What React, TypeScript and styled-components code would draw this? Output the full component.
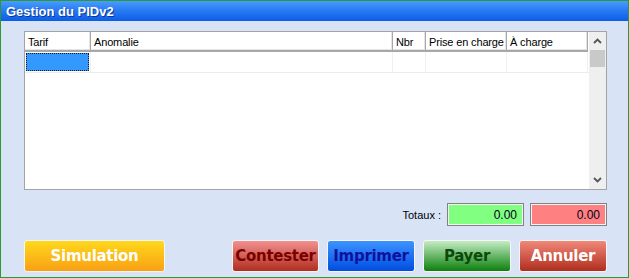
import React from 'react';
import styled, { createGlobalStyle } from 'styled-components';

const GlobalStyle = createGlobalStyle`
  html, body {
    margin: 0;
    padding: 0;
    background: #d8e4f6;
  }
  * {
    box-sizing: border-box;
  }
`;

const Window = styled.div`
  width: 629px;
  height: 278px;
  border: 1px solid #2c9a2c;
  display: flex;
  flex-direction: column;
  background: #d8e4f6;
  font-family: 'Liberation Sans', Arial, sans-serif;
  overflow: hidden;
`;

const TitleBar = styled.div`
  height: 20px;
  display: flex;
  align-items: center;
  padding-left: 5px;
  background: linear-gradient(#4a9cff 0%, #2a7cf4 45%, #0c5ce6 100%);
  color: #ffffff;
  font-size: 13px;
  font-weight: bold;
  text-shadow: 1px 1px 0 #0a3a90;
`;

const Body = styled.div`
  flex: 1;
  display: flex;
  flex-direction: column;
  padding: 10px 21px 5px 23px;
`;

const Grid = styled.div`
  height: 159px;
  border: 1px solid #a4a4a4;
  background: #ffffff;
  display: flex;
`;

const Table = styled.div`
  flex: 1;
  display: flex;
  flex-direction: column;
`;

const HeaderRow = styled.div`
  display: flex;
  height: 20px;
`;

const HeaderCell = styled.div<{ $w: number }>`
  width: ${(p) => p.$w}px;
  flex: 0 0 auto;
  display: flex;
  align-items: center;
  padding-left: 3px;
  font-size: 11px;
  letter-spacing: -0.15px;
  color: #000000;
  background: #ffffff;
  box-shadow: inset -1px -2px 0 #a8a8a8, inset -2px -3px 0 #e4e4e4;
  white-space: nowrap;
  overflow: hidden;
`;

const DataRow = styled.div`
  display: flex;
  height: 21px;
  border-bottom: 1px solid #ececec;
`;

const DataCell = styled.div<{ $w: number; $selected?: boolean }>`
  width: ${(p) => p.$w}px;
  flex: 0 0 auto;
  border-right: 1px solid #f0f0f0;
  padding: 1px;
  display: flex;
  &::before {
    content: '';
    flex: 1;
    background: ${(p) => (p.$selected ? '#3399ff' : 'transparent')};
    border: ${(p) => (p.$selected ? '1px dotted #1a1a1a' : 'none')};
  }
`;

const Scrollbar = styled.div`
  width: 17px;
  background: #efefef;
  display: flex;
  flex-direction: column;
`;

const ScrollArrow = styled.div`
  height: 18px;
  display: flex;
  align-items: center;
  justify-content: center;
`;

const ScrollThumb = styled.div`
  height: 17px;
  margin: 0 1px;
  background: #c9c9c9;
`;

const ScrollTrack = styled.div`
  flex: 1;
`;

const TotalsRow = styled.div`
  display: flex;
  justify-content: flex-end;
  align-items: center;
  gap: 6px;
  margin-top: 13px;
`;

const TotalsLabel = styled.span`
  font-size: 11px;
  color: #000000;
`;

const TotalBox = styled.div<{ $bg: string }>`
  width: 77px;
  height: 23px;
  border: 1px solid #828282;
  box-shadow: inset 0 0 0 1px #f4f4f4;
  background: ${(p) => p.$bg};
  display: flex;
  align-items: center;
  justify-content: flex-end;
  padding-right: 6px;
  font-size: 12px;
  color: #000020;
`;

const ButtonRow = styled.div`
  display: flex;
  gap: 8px;
  margin-top: 14px;
`;

const ActionButton = styled.button<{ $top: string; $bottom: string; $color: string; $w: number }>`
  width: ${(p) => p.$w}px;
  height: 32px;
  border: 1px solid #f6f6f6;
  border-radius: 3px;
  background: linear-gradient(${(p) => p.$top}, ${(p) => p.$bottom});
  color: ${(p) => p.$color};
  font-family: 'DejaVu Sans', 'Liberation Sans', sans-serif;
  font-size: 15px;
  font-weight: bold;
  letter-spacing: -0.3px;
  padding: 0;
  cursor: pointer;
  &:first-child {
    margin-right: auto;
  }
`;

const columns = [
  { label: 'Tarif', w: 66 },
  { label: 'Anomalie', w: 302 },
  { label: 'Nbr', w: 33 },
  { label: 'Prise en charge', w: 81 },
  { label: 'À charge', w: 81 },
];

const buttons = [
  { label: 'Simulation', top: '#ffd81c', bottom: '#f9a014', color: '#ffffff', w: 141 },
  { label: 'Contester', top: '#f29090', bottom: '#b02e1e', color: '#7a0000', w: 87 },
  { label: 'Imprimer', top: '#3d94ff', bottom: '#004ee0', color: '#1010a0', w: 88 },
  { label: 'Payer', top: '#c4ecc4', bottom: '#0c800c', color: '#0c4a0c', w: 88 },
  { label: 'Annuler', top: '#f08878', bottom: '#b02e1e', color: '#ffffff', w: 88 },
];

const Chevron = ({ up }: { up?: boolean }) => (
  <svg width="9" height="6" viewBox="0 0 9 6">
    <path
      d={up ? 'M1 5 L4.5 1.5 L8 5' : 'M1 1 L4.5 4.5 L8 1'}
      fill="none"
      stroke="#555555"
      strokeWidth="1.8"
    />
  </svg>
);

const App = () => (
  <>
    <GlobalStyle />
    <Window>
      <TitleBar>Gestion du PIDv2</TitleBar>
      <Body>
        <Grid>
          <Table>
            <HeaderRow>
              {columns.map((c) => (
                <HeaderCell key={c.label} $w={c.w}>
                  {c.label}
                </HeaderCell>
              ))}
            </HeaderRow>
            <DataRow>
              {columns.map((c, i) => (
                <DataCell key={c.label} $w={c.w} $selected={i === 0} />
              ))}
            </DataRow>
          </Table>
          <Scrollbar>
            <ScrollArrow>
              <Chevron up />
            </ScrollArrow>
            <ScrollThumb />
            <ScrollTrack />
            <ScrollArrow>
              <Chevron />
            </ScrollArrow>
          </Scrollbar>
        </Grid>
        <TotalsRow>
          <TotalsLabel>Totaux :</TotalsLabel>
          <TotalBox $bg="#80ff80">0.00</TotalBox>
          <TotalBox $bg="#ff8080">0.00</TotalBox>
        </TotalsRow>
        <ButtonRow>
          {buttons.map((b) => (
            <ActionButton key={b.label} $top={b.top} $bottom={b.bottom} $color={b.color} $w={b.w}>
              {b.label}
            </ActionButton>
          ))}
        </ButtonRow>
      </Body>
    </Window>
  </>
);

export default App;
